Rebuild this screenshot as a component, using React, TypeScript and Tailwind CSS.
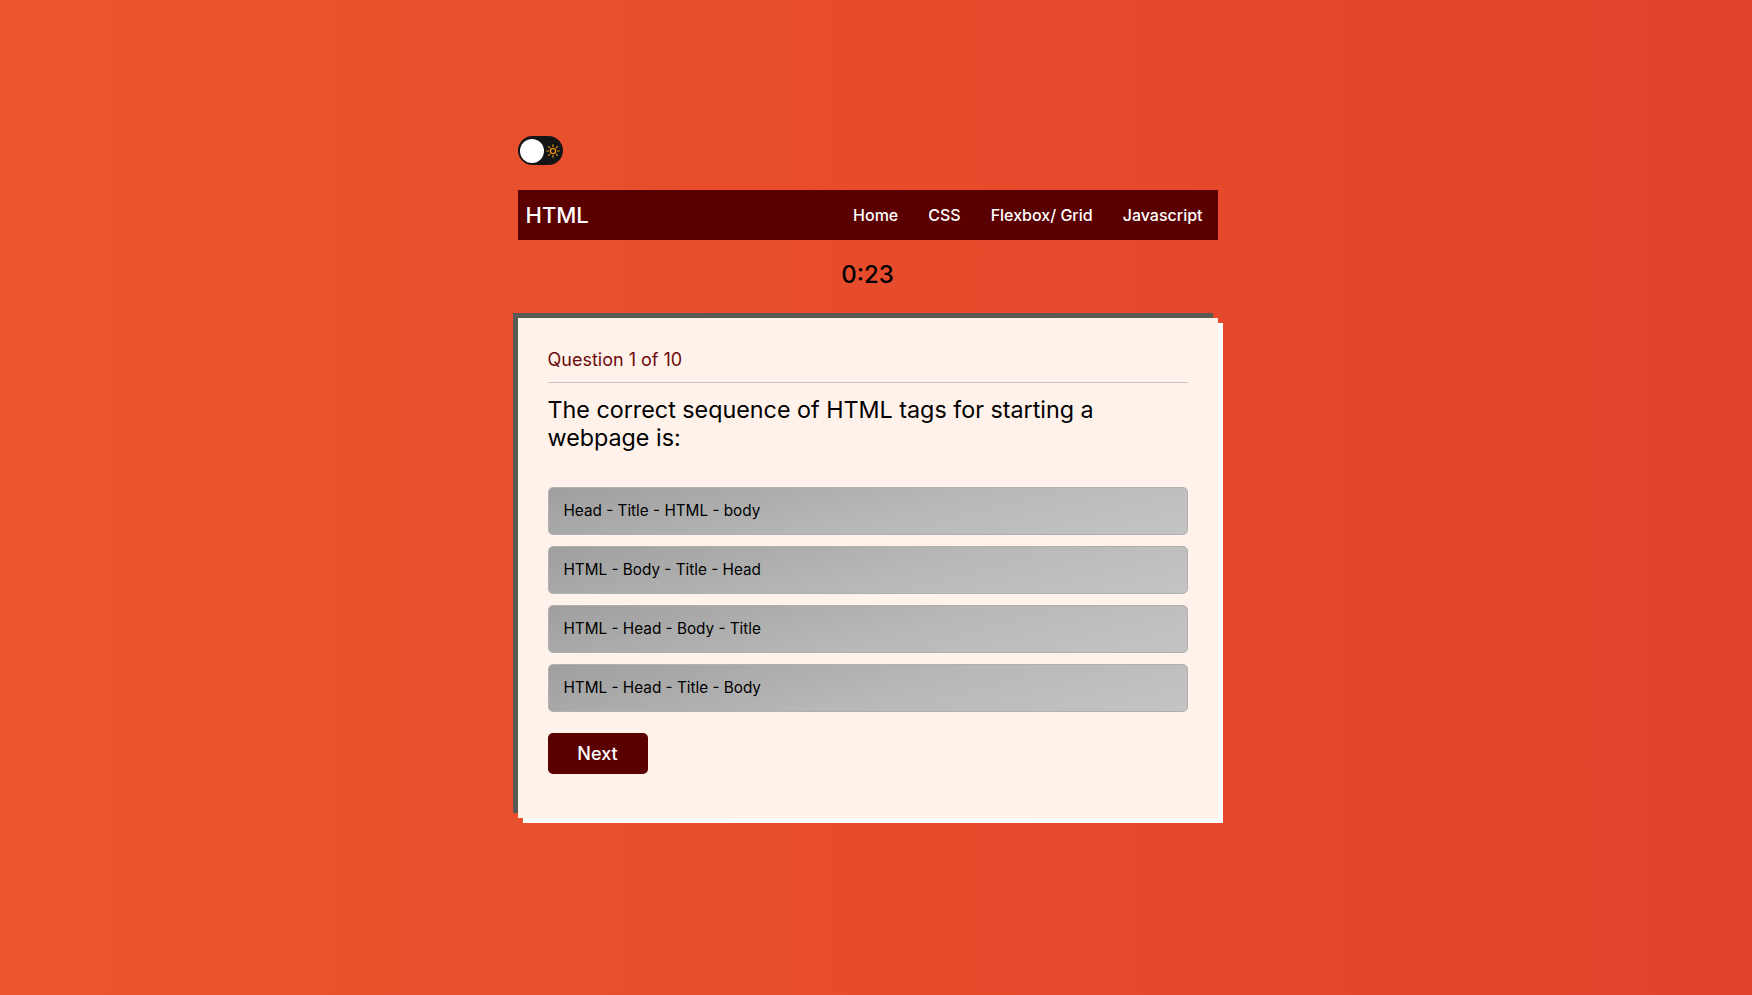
import React from "react";

const options = [
  "Head - Title - HTML - body",
  "HTML - Body - Title - Head",
  "HTML - Head - Body - Title",
  "HTML - Head - Title - Body",
];

export default function App() {
  return (
    <div
      className="min-h-[995px] w-full bg-[linear-gradient(90deg,#ec552e_0%,#e0432a_100%)] pr-[17px]"
      style={{ fontFamily: "Inter, 'Open Sans', sans-serif" }}
    >
      <div className="mx-auto w-[700px] pt-[136px]">
        <div className="flex h-[29px] w-[45px] items-center rounded-full bg-[#151515] px-[2px]">
          <div className="h-[24px] w-[24px] rounded-full bg-white" />
          <svg width="14" height="14" viewBox="0 0 14 14" className="ml-[2px]">
            <circle cx="7" cy="7" r="2.6" fill="none" stroke="#e8901a" strokeWidth="1.4" />
            <g stroke="#e8901a" strokeWidth="1.2" strokeLinecap="round">
              <line x1="7" y1="0.8" x2="7" y2="2.4" />
              <line x1="7" y1="11.6" x2="7" y2="13.2" />
              <line x1="0.8" y1="7" x2="2.4" y2="7" />
              <line x1="11.6" y1="7" x2="13.2" y2="7" />
              <line x1="2.6" y1="2.6" x2="3.7" y2="3.7" />
              <line x1="10.3" y1="10.3" x2="11.4" y2="11.4" />
              <line x1="2.6" y1="11.4" x2="3.7" y2="10.3" />
              <line x1="10.3" y1="3.7" x2="11.4" y2="2.6" />
            </g>
          </svg>
        </div>

        <nav className="mt-[25px] flex h-[50px] items-center justify-between bg-[#5a0000] pl-[8px] pr-[15px] text-white">
          <span className="text-[22px] font-medium">HTML</span>
          <div className="flex items-center gap-[30px] text-[16px] font-medium">
            <span>Home</span>
            <span>CSS</span>
            <span>Flexbox/ Grid</span>
            <span>Javascript</span>
          </div>
        </nav>

        <div className="mt-[17px] text-center text-[24px] font-medium text-black">0:23</div>

        <div className="mt-[25px] h-[500px] bg-[#fff2ea] px-[30px] pt-[28px] shadow-[-5px_-5px_0_#5b5955,5px_5px_0_#ffffff]">
          <div className="text-[18px] text-[#6e0a0a]">Question 1 of 10</div>
          <div className="mt-[9px] h-px bg-[#c8c4c2]" />
          <div className="mt-[13px] text-[23.3px] leading-[28px] text-black">
            The correct sequence of HTML tags for starting a webpage is:
          </div>
          <div className="mt-[35px] flex flex-col gap-[11px]">
            {options.map((o) => (
              <div
                key={o}
                className="flex h-[48px] items-center rounded-[5px] border border-[#b0b0b0] bg-[linear-gradient(165deg,#9f9f9f_0%,#b8b8b8_55%,#c4c4c4_100%)] pl-[15px] text-[15.3px] text-black"
              >
                {o}
              </div>
            ))}
          </div>
          <button className="mt-[21px] h-[41px] w-[100px] rounded-[5px] bg-[#5a0000] text-[18px] font-medium text-white">
            Next
          </button>
        </div>
      </div>
    </div>
  );
}
